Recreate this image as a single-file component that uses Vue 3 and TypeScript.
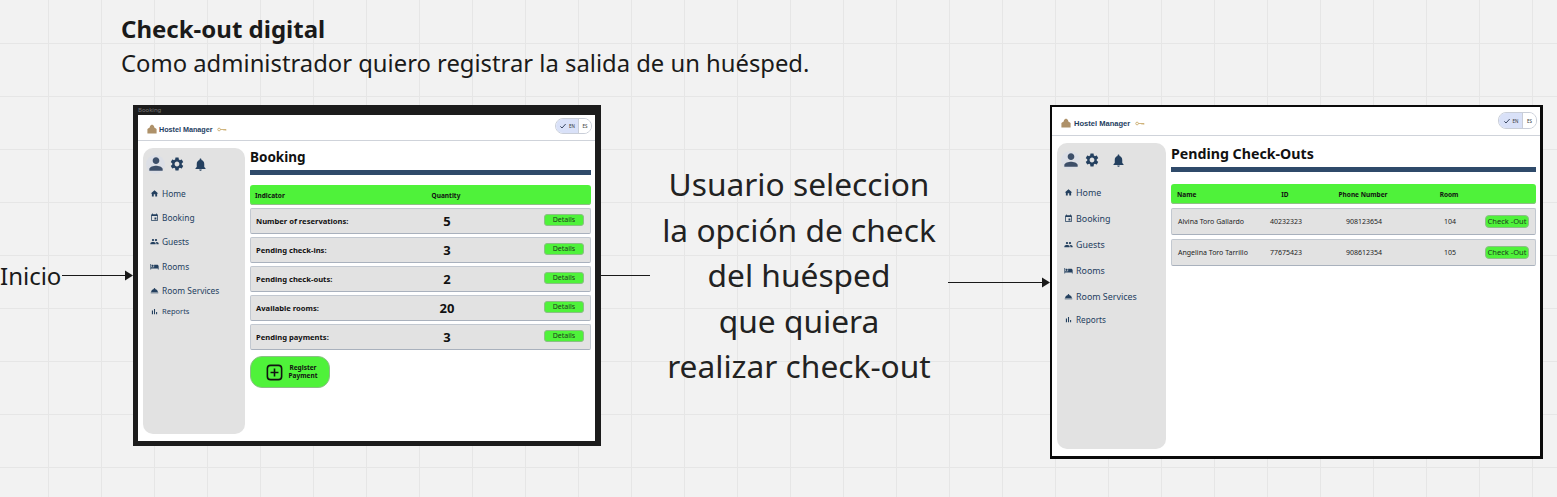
<template>
  <div class="board">
    <header class="story">
      <h1>Check-out digital</h1>
      <p>Como administrador quiero registrar la salida de un huésped.</p>
    </header>

    <!-- flechas del flujo -->
    <span class="start">Inicio</span>
    <svg class="arrows" width="1557" height="497" viewBox="0 0 1557 497">
      <path d="M62 275.5H128" />
      <path class="tip" d="M125 270.5L133 275.5L125 280.5Z" />
      <path d="M601 275.5H650" />
      <path d="M948 282.5H1044" />
      <path class="tip" d="M1042 277.5L1050 282.5L1042 287.5Z" />
    </svg>

    <div class="note">
      <span v-for="line in noteLines" :key="line">{{ line }}</span>
    </div>

    <section v-for="screen in screens" :key="screen" class="screen" :class="`screen-${screen}`">
      <div v-if="screen === 'booking'" class="frame-label">Booking</div>
      <div class="topbar">
        <div class="brand">
          <svg class="house" viewBox="0 0 24 22"><path d="M12 0L7 4V7L1 11V22H23V11L17 7V4Z" /></svg>
          <strong>Hostel Manager</strong>
          <svg class="key" viewBox="0 0 24 10">
            <circle cx="5" cy="5" r="3.2" />
            <path d="M8 5H22M17 5V8M21 5V8" />
          </svg>
        </div>
        <div class="lang">
          <span class="lang-on"><svg viewBox="0 0 24 24"><path d="M4 13l5 5L20 6" /></svg>EN</span>
          <span class="lang-off">ES</span>
        </div>
      </div>

      <div class="body">
        <aside class="sidebar">
          <div class="tools">
            <span class="avatar"><svg viewBox="0 0 24 24"><path :d="icons.person" /></svg></span>
            <svg class="gear" viewBox="0 0 24 24"><path :d="icons.gear" /></svg>
            <svg class="bell" viewBox="0 0 24 24"><path :d="icons.bell" /></svg>
          </div>
          <nav class="nav">
            <a v-for="item in navItems" :key="item.label" :class="{ small: item.label === 'Reports' }">
              <svg viewBox="0 0 24 24"><path :d="icons[item.icon]" /></svg>
              {{ item.label }}
            </a>
          </nav>
        </aside>

        <main class="content">
          <h2>{{ screen === 'booking' ? 'Booking' : 'Pending Check-Outs' }}</h2>
          <div class="rule"></div>

          <template v-if="screen === 'booking'">
            <div class="thead grid-booking">
              <span>Indicator</span>
              <span class="center">Quantity</span>
            </div>
            <div v-for="row in indicators" :key="row.label" class="row grid-booking">
              <b>{{ row.label }}</b>
              <span class="qty">{{ row.value }}</span>
              <button class="action">Details</button>
            </div>
            <button class="register">
              <svg viewBox="0 0 24 24"><rect x="3" y="3" width="18" height="18" rx="4" /><path d="M12 7V17M7 12H17" /></svg>
              <span>Register<br />Payment</span>
            </button>
          </template>

          <template v-else>
            <div class="thead grid-checkout">
              <span>Name</span>
              <span class="center">ID</span>
              <span class="center">Phone Number</span>
              <span class="center">Room</span>
            </div>
            <div v-for="guest in guests" :key="guest.id" class="row grid-checkout">
              <span>{{ guest.name }}</span>
              <span class="center">{{ guest.id }}</span>
              <span class="center">{{ guest.phone }}</span>
              <span class="center">{{ guest.room }}</span>
              <button class="action">Check -Out</button>
            </div>
          </template>
        </main>
      </div>
    </section>
  </div>
</template>

<script setup lang="ts">
const screens = ['booking', 'checkout']

const noteLines = [
  'Usuario seleccion',
  'la opción de check',
  'del huésped',
  'que quiera',
  'realizar check-out',
]

const icons: Record<string, string> = {
  person: 'M12 12c2.21 0 4-1.79 4-4s-1.79-4-4-4-4 1.79-4 4 1.79 4 4 4zm0 2c-2.67 0-8 1.34-8 4v2h16v-2c0-2.66-5.33-4-8-4z',
  gear: 'M19.14 12.94c.04-.3.06-.61.06-.94 0-.32-.02-.64-.07-.94l2.03-1.58c.18-.14.23-.41.12-.61l-1.92-3.32c-.12-.22-.37-.29-.59-.22l-2.39.96c-.5-.38-1.03-.7-1.62-.94l-.36-2.54c-.04-.24-.24-.41-.48-.41h-3.84c-.24 0-.43.17-.47.41l-.36 2.54c-.59.24-1.13.57-1.62.94l-2.39-.96c-.22-.08-.47 0-.59.22L2.74 8.87c-.12.21-.08.47.12.61l2.03 1.58c-.05.3-.09.63-.09.94s.02.64.07.94l-2.03 1.58c-.18.14-.23.41-.12.61l1.92 3.32c.12.22.37.29.59.22l2.39-.96c.5.38 1.03.7 1.62.94l.36 2.54c.05.24.24.41.48.41h3.84c.24 0 .44-.17.47-.41l.36-2.54c.59-.24 1.13-.56 1.62-.94l2.39.96c.22.08.47 0 .59-.22l1.92-3.32c.12-.22.07-.47-.12-.61l-2.01-1.58zM12 15.6c-1.98 0-3.6-1.62-3.6-3.6s1.62-3.6 3.6-3.6 3.6 1.62 3.6 3.6-1.62 3.6-3.6 3.6z',
  bell: 'M12 22c1.1 0 2-.9 2-2h-4c0 1.1.9 2 2 2zm6-6v-5c0-3.07-1.63-5.64-4.5-6.32V4c0-.83-.67-1.5-1.5-1.5s-1.5.67-1.5 1.5v.68C7.64 5.36 6 7.92 6 11v5l-2 2v1h16v-1l-2-2z',
  home: 'M10 20v-6h4v6h5v-8h3L12 3 2 12h3v8z',
  event: 'M17 12h-5v5h5v-5zM16 1v2H8V1H6v2H5c-1.11 0-1.99.9-1.99 2L3 19c0 1.1.89 2 2 2h14c1.1 0 2-.9 2-2V5c0-1.1-.9-2-2-2h-1V1h-2zm3 18H5V8h14v11z',
  group: 'M16 11c1.66 0 2.99-1.34 2.99-3S17.66 5 16 5c-1.66 0-3 1.34-3 3s1.34 3 3 3zm-8 0c1.66 0 2.99-1.34 2.99-3S9.66 5 8 5C6.34 5 5 6.34 5 8s1.34 3 3 3zm0 2c-2.33 0-7 1.17-7 3.5V19h14v-2.5c0-2.33-4.67-3.5-7-3.5zm8 0c-.29 0-.62.02-.97.05 1.16.84 1.97 1.97 1.97 3.45V19h6v-2.5c0-2.33-4.67-3.5-7-3.5z',
  bed: 'M7 13c1.66 0 3-1.34 3-3S8.66 7 7 7s-3 1.34-3 3 1.34 3 3 3zm12-6h-8v7H3V5H1v15h2v-3h18v3h2v-9c0-2.21-1.79-4-4-4z',
  service: 'M2 17h20v2H2zm11.84-9.21c.1-.24.16-.51.16-.79 0-1.1-.9-2-2-2s-2 .9-2 2c0 .28.06.55.16.79C6.25 8.6 3.27 11.93 3 16h18c-.27-4.07-3.25-7.4-7.16-8.21z',
  chart: 'M5 9.2h3V19H5zM10.6 5h2.8v14h-2.8zm5.6 8H19v6h-2.8z',
}

const navItems = [
  { label: 'Home', icon: 'home' },
  { label: 'Booking', icon: 'event' },
  { label: 'Guests', icon: 'group' },
  { label: 'Rooms', icon: 'bed' },
  { label: 'Room Services', icon: 'service' },
  { label: 'Reports', icon: 'chart' },
]

const indicators = [
  { label: 'Number of reservations:', value: 5 },
  { label: 'Pending check-ins:', value: 3 },
  { label: 'Pending check-outs:', value: 2 },
  { label: 'Available rooms:', value: 20 },
  { label: 'Pending payments:', value: 3 },
]

const guests = [
  { name: 'Alvina Toro Gallardo', id: '40232323', phone: '908123654', room: 104 },
  { name: 'Angelina Toro Tarrillo', id: '77675423', phone: '908612354', room: 105 },
]
</script>

<style scoped>
.board {
  position: relative;
  width: 1557px;
  height: 497px;
  overflow: hidden;
  font-family: 'Noto Sans', 'Open Sans', sans-serif;
  color: #1a1a1a;
  background-color: #f2f2f2;
  background-image:
    linear-gradient(#e6e6e6 1px, transparent 1px),
    linear-gradient(90deg, #e6e6e6 1px, transparent 1px);
  background-size: 53px 53px;
  background-position: 48px 43px;
}

/* Elementos libres de la pizarra */
.story {
  position: absolute;
  left: 121px;
  top: 13px;
}
.story h1 {
  margin: 0;
  font-size: 24px;
  line-height: 32px;
  font-weight: 700;
}
.story p {
  margin: 0;
  font-size: 23.8px;
  line-height: 36px;
}

.start {
  position: absolute;
  left: 0;
  top: 261px;
  font-size: 24px;
  line-height: 30px;
}

.arrows {
  position: absolute;
  left: 0;
  top: 0;
  fill: none;
  stroke: #1a1a1a;
  stroke-width: 1;
}
.arrows .tip {
  fill: #1a1a1a;
  stroke: none;
}

.note {
  position: absolute;
  left: 639px;
  top: 161px;
  width: 320px;
  display: flex;
  flex-direction: column;
  align-items: center;
  font-size: 31.7px;
  line-height: 45.5px;
  color: #222;
}

/* Pantallas */
.screen {
  position: absolute;
  box-sizing: border-box;
  display: flex;
  flex-direction: column;
  background: #fff;
}
.screen-booking {
  left: 133px;
  top: 105px;
  width: 468px;
  height: 341px;
  border: solid #1c1c1c;
  border-width: 10px 6px 5px 5px;
}
.screen-checkout {
  left: 1050px;
  top: 105px;
  width: 493px;
  height: 354px;
  border: solid #0a0a0a;
  border-width: 2px 3px 3px 2px;
}

.frame-label {
  position: absolute;
  left: 0;
  top: -9px;
  font-size: 6px;
  line-height: 8px;
  color: #777;
}

.topbar {
  box-sizing: border-box;
  display: flex;
  align-items: center;
  justify-content: space-between;
  height: 26px;
  padding: 0 3px 0 9px;
  border-bottom: 1px solid #cfd3da;
}
.screen-checkout .topbar {
  align-items: flex-start;
  height: 29px;
  padding: 5px 3px 0 9px;
}

.brand {
  display: flex;
  align-items: center;
  gap: 2px;
  margin-top: 3px;
  font-family: 'Liberation Sans', Arial, sans-serif;
  font-size: 7.2px;
  color: #24405f;
}
.screen-checkout .brand {
  margin-top: 6px;
  gap: 3px;
  font-size: 7.55px;
}
.house {
  width: 10px;
  height: 10px;
  fill: #ae9169;
}
.key {
  width: 10px;
  height: 5px;
  margin-left: 2px;
  fill: none;
  stroke: #c9a868;
  stroke-width: 2;
}

.lang {
  display: flex;
  height: 14px;
  margin-top: -3px;
  border: 1px solid #c9ced8;
  border-radius: 8px;
  overflow: hidden;
  font-size: 4.5px;
  line-height: 12px;
  color: #333;
}
.screen-checkout .lang {
  margin-top: 0;
  height: 15px;
}
.lang span {
  display: flex;
  align-items: center;
  justify-content: center;
}
.lang-on {
  width: 23px;
  gap: 2px;
  background: #d9e1f8;
}
.screen-booking .lang-on {
  width: 22px;
}
.lang-on svg {
  width: 8px;
  height: 8px;
  fill: none;
  stroke: #1c2a44;
  stroke-width: 2.5;
}
.lang-off {
  width: 13px;
  border-left: 1px solid #c9ced8;
  background: #fff;
}
.screen-booking .lang-off {
  width: 12px;
}

.body {
  flex: 1;
  display: flex;
  min-height: 0;
  padding: 7px 4px 7px 5px;
  gap: 5px;
}

.sidebar {
  width: 102px;
  flex-shrink: 0;
  box-sizing: border-box;
  padding: 8px 0 0 6px;
  background: #e2e2e2;
  border-radius: 10px;
  color: #24405f;
}
.screen-checkout .sidebar {
  width: 109px;
  padding: 9px 0 0 7px;
}

.tools {
  display: flex;
  align-items: center;
  height: 16px;
}
.tools svg {
  fill: #24405f;
}
.avatar {
  position: relative;
  width: 13px;
  height: 16px;
}
/* círculo claro detrás del avatar */
.avatar::before {
  content: '';
  position: absolute;
  left: -3px;
  top: -1px;
  width: 19px;
  height: 19px;
  border-radius: 50%;
  background: #dcdfe6;
}
.avatar svg {
  position: relative;
  width: 20px;
  height: 20px;
  margin: -2px 0 0 -3.5px;
  display: block;
  fill: #3d4f69;
}
.gear {
  width: 16px;
  height: 16px;
  margin-left: 7px;
}
.bell {
  width: 15px;
  height: 15px;
  margin-left: 8px;
}
.screen-checkout .gear {
  margin-left: 7px;
}
.screen-checkout .bell {
  margin-left: 11px;
}

.nav {
  display: flex;
  flex-direction: column;
  margin: 9px 0 0 1px;
}
.nav a {
  display: flex;
  align-items: center;
  gap: 3px;
  height: 24.3px;
  font-size: 8.4px;
}
.nav a.small {
  height: 18px;
  font-size: 7.5px;
}
.nav svg {
  width: 9px;
  height: 9px;
  flex-shrink: 0;
  fill: #24405f;
}
.screen-checkout .nav {
  margin: 11px 0 0;
}
.screen-checkout .nav a {
  height: 26px;
  font-size: 8.9px;
}
.screen-checkout .nav a.small {
  height: 20px;
  font-size: 8.2px;
}

.content {
  flex: 1;
  min-width: 0;
  display: flex;
  flex-direction: column;
  align-items: stretch;
}
.content h2 {
  margin: 0;
  font-size: 13.5px;
  line-height: 19px;
  font-weight: 700;
  color: #111;
}
.rule {
  height: 5px;
  margin: 3px 0 10px;
  background: #2f4a6a;
}
.screen-checkout .content h2 {
  font-size: 14.2px;
  line-height: 20px;
  margin-top: 1px;
}
.screen-checkout .rule {
  margin: 3px 0 12px;
}

.grid-booking {
  display: grid;
  grid-template-columns: 160px 62px 1fr;
  padding: 0 6px 0 5px;
  align-items: center;
}
.grid-checkout {
  display: grid;
  grid-template-columns: 86px 44px 112px 60px 1fr;
  padding: 0 6px 0 6px;
  align-items: center;
}
.center {
  text-align: center;
}

.thead {
  height: 20px;
  background: #4ff23a;
  border-radius: 3px;
  font-size: 6.5px;
  font-weight: 700;
  color: #111;
  box-shadow: inset 0 -1px 0 #8fbf86;
}
.row {
  box-sizing: border-box;
  margin-top: 3px;
  height: 26px;
  background: #e2e2e2;
  border: 1px solid #c2c8d0;
  border-bottom-color: #a9b1bd;
  border-radius: 2px;
  font-size: 7px;
  color: #222;
}
.row b {
  font-size: 7.6px;
  color: #111;
}
.qty {
  font-size: 13px;
  font-weight: 700;
  text-align: center;
  color: #111;
}
.grid-checkout.row {
  height: 27.5px;
  margin-top: 3.5px;
}

.action {
  justify-self: end;
  width: 40px;
  height: 12px;
  margin-top: -2px;
  padding: 0;
  background: #4ff23a;
  border: 1px solid #8cbf86;
  border-radius: 3px;
  font-family: inherit;
  font-size: 7px;
  line-height: 10px;
  color: #1c3a1c;
}
.grid-checkout .action {
  width: 44px;
  height: 13px;
  margin-top: 0;
  border-radius: 4px;
  font-size: 7.5px;
}

.register {
  align-self: flex-start;
  display: flex;
  align-items: center;
  justify-content: center;
  gap: 5px;
  width: 80px;
  height: 32px;
  margin-top: 6px;
  padding: 0 0 0 2px;
  background: #4ff23a;
  border: 1px solid #8cbf86;
  border-radius: 12px;
  font-family: inherit;
  font-size: 6.5px;
  line-height: 8.5px;
  font-weight: 700;
  color: #111;
}
.register svg {
  width: 19px;
  height: 19px;
  fill: none;
  stroke: #111;
  stroke-width: 2;
}
</style>

<style>
body {
  background: #f2f2f2;
}
</style>
